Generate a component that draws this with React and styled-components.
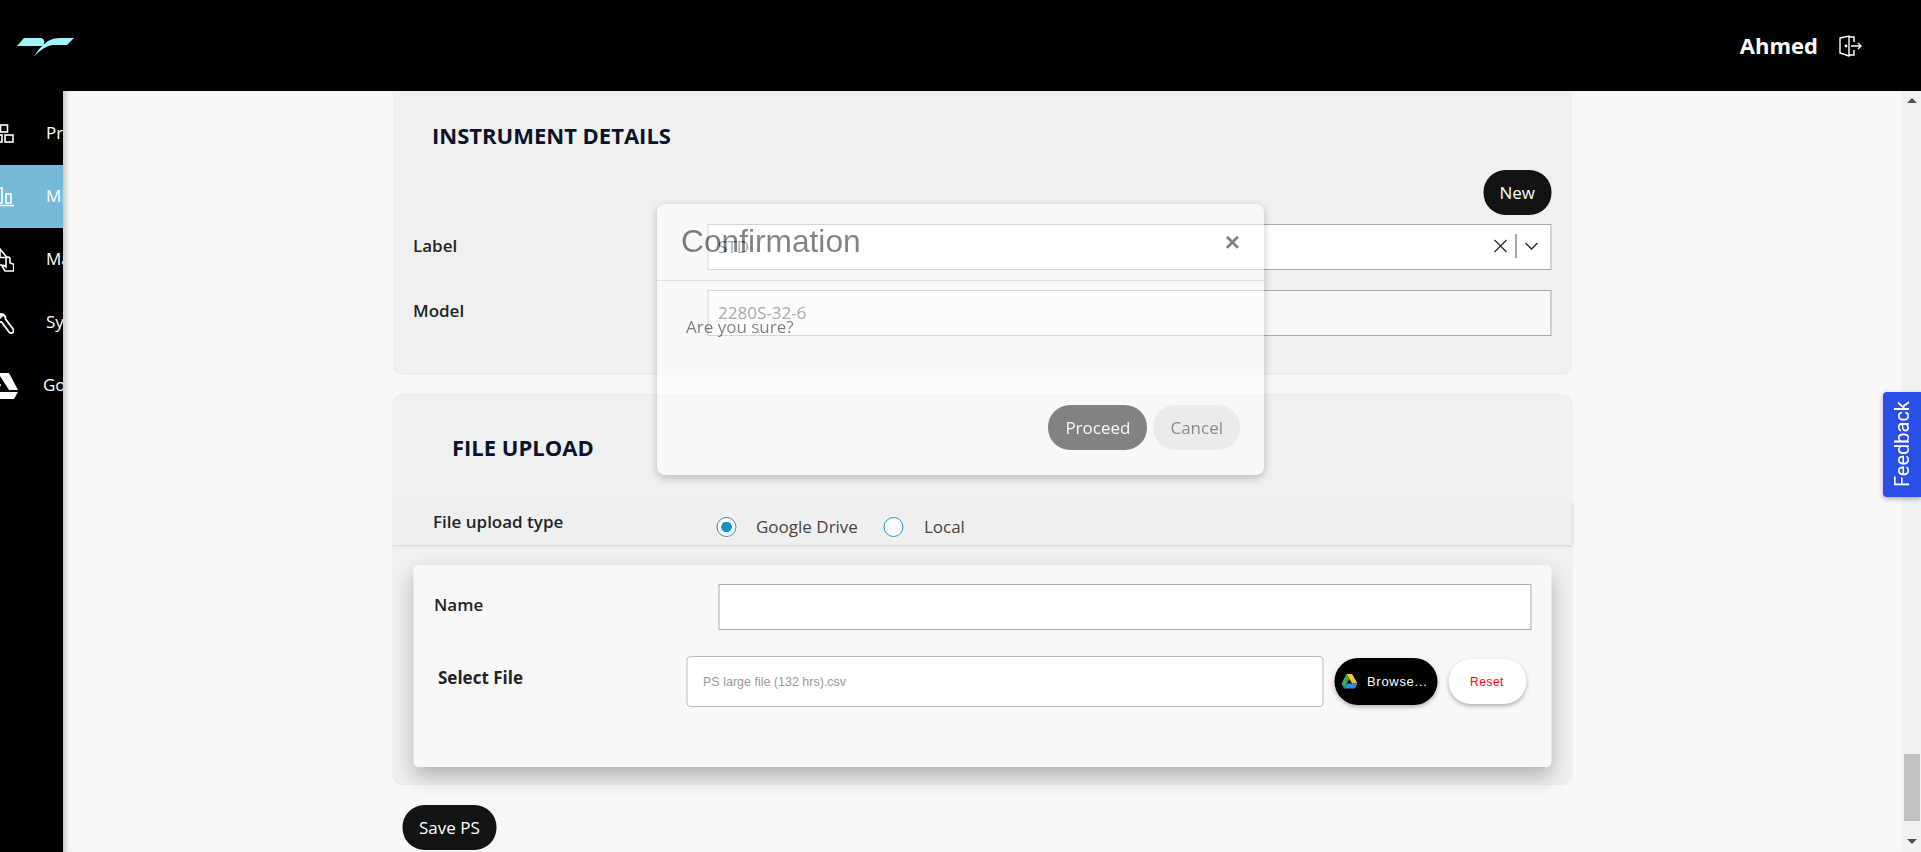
import React from 'react'
import styled, { createGlobalStyle } from 'styled-components'

const GlobalStyle = createGlobalStyle`
    html, body {
        margin: 0;
        height: 100%;
        overflow: hidden;
    }
    body {
        font-family: "Open Sans", "Liberation Sans", sans-serif;
        background-color: #000;
    }
    * {
        box-sizing: border-box;
    }
`

const Page = styled.div`
    display: flex;
    flex-direction: column;
    height: 852px;
    overflow: hidden;
`

const Header = styled.header`
    display: flex;
    justify-content: space-between;
    align-items: center;
    flex: 0 0 91px;
    background-color: #000;
    padding: 0 59px 0 17px;
`

const LogoSvg = styled.svg`
    margin-top: 3px;
`

const UserBox = styled.div`
    display: flex;
    align-items: center;
    gap: 21px;
    color: #fff;
    font-size: 22px;
    font-weight: 700;
`

const UserName = styled.span`
    padding-bottom: 2px;
`

const Body = styled.div`
    display: flex;
    flex: 1;
    min-height: 0;
`

const Sidebar = styled.nav`
    flex: 0 0 63px;
    padding-top: 11px;
    background-color: #000;
    overflow: hidden;
`

const NavRow = styled.div`
    display: flex;
    align-items: center;
    height: 63px;
    width: 240px;
    margin-left: -10px;
    padding-left: 10px;
    gap: ${props => props.$gap || 32}px;
    color: #fff;
    font-size: 17px;
    background-color: ${props => props.$active ? '#76bad9' : 'transparent'};

    svg {
        margin-left: -10px;
        flex: none;
    }

    span {
        padding-bottom: 2px;
    }
`

const Main = styled.main`
    flex: 1;
    min-width: 0;
    background-color: #f8f8f8;
    box-shadow: inset 7px 0 6px -5px rgba(0,0,0,25%);
    overflow: hidden;
`

const Column = styled.div`
    width: 1180px;
    margin: 0 auto;
    transform: translateX(-0.5px);
`

const Card = styled.section`
    position: relative;
    background-color: #f0f0f0;
    border-radius: ${props => props.$flat ? '0 0 10px 10px' : '10px'};
    margin-bottom: ${props => props.$flat ? '19px' : '0'};
    padding: ${props => props.$flat ? '30px 20px 39px 20px' : '0'};
    border: solid 1px #ececec;
    border-top: ${props => props.$flat ? 'none' : 'solid 1px #ececec'};
    height: ${props => props.$flat ? '284px' : '391px'};
`

const CardTitle = styled.h2`
    margin: 0;
    padding-left: ${props => props.$indent || 0}px;
    font-size: 22px;
    line-height: 28px;
    font-weight: 700;
    color: #0b132b;
`

const NewRow = styled.div`
    display: flex;
    justify-content: flex-end;
    margin: 21px 0 9px;
`

const PillButton = styled.button`
    height: 45px;
    padding: 0 ${props => props.$pad || 17}px;
    border: none;
    border-radius: 22px;
    background-color: #121414;
    color: #fff;
    font-family: inherit;
    font-size: 17px;
`

const FormRow = styled.div`
    display: flex;
    align-items: center;
    margin-bottom: ${props => props.$gap || 20}px;
`

const FieldLabel = styled.label`
    flex: 0 0 ${props => props.$width || 294}px;
    font-size: 17px;
    font-weight: ${props => props.$heavy ? 700 : 600};
    color: #212529;
    padding-bottom: ${props => props.$lift || 0}px;
`

const FieldBox = styled.div`
    display: flex;
    align-items: center;
    flex: 1;
    height: 46px;
    padding: 0 0 2px 10px;
    border: solid 1px #aaa;
    background-color: ${props => props.$dim ? '#f8f8f8' : '#fff'};
    color: #555;
    font-size: 17px;
`

const FieldValue = styled.span`
    flex: 1;
`

const SelectControls = styled.div`
    display: flex;
    align-items: center;
    height: 24px;
    padding-right: 12px;
    color: #222;
`

const SelectDivider = styled.span`
    width: 1px;
    height: 24px;
    margin: 0 8px;
    background-color: #555;
`

const UploadHead = styled.div`
    height: 106px;
    padding: 38px 0 0 59px;
`

const TypeStrip = styled.div`
    display: flex;
    align-items: flex-start;
    height: 44px;
    margin: 0 -1px;
    padding: 9px 0 0 41px;
    background-color: #efefef;
    box-shadow: 0 1px 2px rgba(0,0,0,12%), 0 -1px 1px rgba(0,0,0,2%);
`

const RadioOption = styled.div`
    display: flex;
    align-items: center;
    gap: 20px;
    margin: 5px 26px 0 0;
    color: #444;
    font-size: 17px;
`

const RadioMark = styled.span`
    display: block;
    width: 20px;
    height: 20px;
    border-radius: 50%;
    border: solid 1.5px #1a9ad6;
    background: ${props => props.$on
        ? 'radial-gradient(circle, #1292c8 0 5px, #fff 5.5px)'
        : '#fff'};
`

const InnerCard = styled.div`
    height: 202px;
    margin: 20px 20px 0;
    padding: 19px 20px 0 21px;
    background-color: #f8f8f8;
    border-radius: 5px;
    box-shadow: 0 10px 20px rgba(0,0,0,25%);
`

const NameInput = styled.div`
    flex: 1;
    height: 46px;
    border: solid 1px #aaa;
    background-color: #fff;
`

const FileRow = styled.div`
    display: flex;
    align-items: center;
    margin-top: 26px;
    padding-left: 4px;
`

const FileInput = styled.div`
    display: flex;
    align-items: center;
    width: 637px;
    height: 51px;
    padding-left: 16px;
    border: solid 1px #bbb;
    border-radius: 4px;
    background-color: #fff;
    color: #999;
    font-family: "Liberation Sans", Arial, sans-serif;
    font-size: 12.5px;
`

const BrowseButton = styled.button`
    display: flex;
    align-items: center;
    gap: 10px;
    width: 103px;
    height: 47px;
    margin-left: 11px;
    padding: 0 0 0 7px;
    border: none;
    border-radius: 24px;
    background-color: #000;
    color: #fff;
    font-family: "Liberation Sans", Arial, sans-serif;
    font-size: 13px;
    letter-spacing: 0.7px;
    box-shadow: 0 2px 4px rgba(0,0,0,30%);
`

const ResetButton = styled.button`
    width: 78px;
    height: 45px;
    margin-left: 11px;
    border: none;
    border-radius: 23px;
    background-color: #fff;
    color: #f00;
    font-family: "Liberation Sans", Arial, sans-serif;
    font-size: 12px;
    letter-spacing: 0.5px;
    box-shadow: 0 2px 4px rgba(0,0,0,30%);
`

const SaveRow = styled.div`
    margin: 20px 0 0 10px;
`

const ScrollTrack = styled.div`
    display: flex;
    flex-direction: column;
    align-items: center;
    flex: 0 0 19px;
    background-color: #f1f1f1;
`

const ScrollArrow = styled.span`
    width: 0;
    height: 0;
    margin: ${props => props.$up ? '7px 0 0' : '18px 0 8px'};
    border-left: 5px solid transparent;
    border-right: 5px solid transparent;
    border-bottom: ${props => props.$up ? '5px solid #505050' : 'none'};
    border-top: ${props => props.$up ? 'none' : '5px solid #505050'};
`

const ScrollThumb = styled.span`
    width: 16px;
    height: 67px;
    margin-top: auto;
    background-color: #c1c1c1;
`

const FeedbackTab = styled.div`
    position: fixed;
    top: 392px;
    right: 0;
    width: 38px;
    height: 105px;
    display: flex;
    align-items: center;
    justify-content: center;
    background-color: #2a4ee8;
    color: #fff;
    font-family: Roboto, sans-serif;
    font-size: 20px;
    border-radius: 4px 0 0 4px;
    box-shadow: 0 2px 5px rgba(0,0,0,30%);

    span {
        writing-mode: vertical-rl;
        transform: rotate(180deg);
    }
`

const Modal = styled.div`
    position: fixed;
    top: 204px;
    left: 657px;
    width: 607px;
    height: 271px;
    display: flex;
    flex-direction: column;
    background-color: #fff;
    border-radius: 8px;
    box-shadow: 0 3px 8px rgba(0,0,0,45%);
    opacity: 0.5;
`

const ModalHead = styled.div`
    display: flex;
    align-items: center;
    justify-content: space-between;
    flex: 0 0 77px;
    padding: 0 24px 0 24px;
    border-bottom: solid 1px #ccc;
`

const ModalTitle = styled.h3`
    margin: 0;
    padding-bottom: 2px;
    font-family: "Liberation Sans", Arial, sans-serif;
    font-size: 31.7px;
    font-weight: 400;
    color: #000a14;
`

const CloseMark = styled.span`
    font-family: "Liberation Sans", Arial, sans-serif;
    font-size: 26px;
    font-weight: 700;
    color: #000a14;
`

const ModalBody = styled.p`
    flex: 1;
    margin: 0;
    padding: 35px 0 0 29px;
    font-size: 17px;
    line-height: 22px;
    color: #000a14;
`

const ModalFoot = styled.div`
    display: flex;
    justify-content: flex-end;
    gap: 6px;
    padding: 0 24px 25px 0;
`

const CancelButton = styled(PillButton)`
    background-color: #e8e6e6;
    color: #222;
`

const LogoMark = () => (
    <LogoSvg width="57" height="20" viewBox="0 0 57 20">
        <path fill="#9ff5f9" d="M0 9 L7 1 L24 1 C28 2 28 6 26 9 Z" />
        <path fill="#9ff5f9" d="M17 20 C21 12 26 8 31 4 C35 2 38 1 43 1 L57 1 L50 8 L36 8 C29 9 23 13 17 20 Z" />
    </LogoSvg>
)

const LogoutIcon = () => (
    <svg width="23" height="22" viewBox="0 0 23 22" fill="none" stroke="#fff" strokeWidth="1.4">
        <path d="M1 3 L10 1 L10 21 L1 18 Z" />
        <path d="M10 2 H15 V7 M15 15 V20 H10" />
        <path d="M12 11 H22 M19 8 L22 11 L19 14" />
        <circle cx="7" cy="11" r="0.7" fill="#fff" />
    </svg>
)

const ProjectIcon = () => (
    <svg width="24" height="24" viewBox="0 0 24 24" fill="none" stroke="#fff" strokeWidth="1.6">
        <rect x="10.5" y="3" width="7" height="7" />
        <rect x="6" y="13" width="6" height="7" />
        <rect x="15" y="13" width="8" height="7" />
    </svg>
)

const ChartIcon = () => (
    <svg width="24" height="24" viewBox="0 0 24 24" fill="none" stroke="#fff" strokeWidth="1.6">
        <rect x="8" y="3" width="4" height="15" />
        <rect x="16" y="9" width="5" height="9" />
        <path d="M0 20.5 H24" />
    </svg>
)

const HandIcon = () => (
    <svg width="24" height="24" viewBox="0 0 24 24" fill="none" stroke="#fff" strokeWidth="1.6">
        <path d="M10 1 L17 9.5 H10 Z" />
        <path d="M9 17 H12" />
        <path d="M18 9 C19 9 20 10 20 11 V15 L23 16 C24 17 24 19 23.5 23 H15 L12 18 C12 17 14 17 16 19 V11 C16 10 17 9 18 9 Z" />
    </svg>
)

const WrenchIcon = () => (
    <svg width="24" height="24" viewBox="0 0 24 24" fill="none" stroke="#fff" strokeWidth="1.8">
        <path d="M9 3 C13 2 16 5 15.5 8 L23 18 C25 21 21 24 19 21 L11.5 11 C8 11 6 8 6 5 L10 7 L12 5 Z" />
    </svg>
)

const DriveOutline = () => (
    <svg width="28" height="26" viewBox="0 0 28 26" fill="#fff">
        <path d="M8 0 H19 L28 17 H19 Z" />
        <path d="M6 3 L11 12 L5 24 L0 15 Z" />
        <path d="M10 19 H28 L24 26 H6 Z" />
    </svg>
)

const DriveColor = () => (
    <svg width="16" height="15" viewBox="0 0 16 15">
        <path fill="#f4c430" d="M5 0 H10.5 L16 9.5 H10.5 Z" />
        <path fill="#34a853" d="M5 0 L7.8 4.8 L2.8 14.5 L0 9.5 Z" />
        <path fill="#2a8fe6" d="M5.4 9.5 H16 L13.2 14.5 H2.8 Z" />
    </svg>
)

const ClearIcon = () => (
    <svg width="14" height="14" viewBox="0 0 14 14" stroke="#222" strokeWidth="1.1">
        <path d="M1 1 L13 13 M13 1 L1 13" />
    </svg>
)

const ChevronIcon = () => (
    <svg width="14" height="10" viewBox="0 0 14 10" fill="none" stroke="#222" strokeWidth="1.3">
        <path d="M1 2 L7 8 L13 2" />
    </svg>
)

const navItems = [
    { label: 'Projects', icon: <ProjectIcon /> },
    { label: 'MI', icon: <ChartIcon />, active: true },
    { label: 'Manage', icon: <HandIcon /> },
    { label: 'System', icon: <WrenchIcon /> },
    { label: 'Google Drive', icon: <DriveOutline />, gap: 25 },
]

const App = () => {
    return (
        <>
        <GlobalStyle />
        <Page>
            <Header>
                <LogoMark />
                <UserBox>
                    <UserName>Ahmed</UserName>
                    <LogoutIcon />
                </UserBox>
            </Header>
            <Body>
                <Sidebar>
                    {navItems.map(item => (
                        <NavRow key={item.label} $active={item.active} $gap={item.gap}>
                            {item.icon}
                            <span>{item.label}</span>
                        </NavRow>
                    ))}
                </Sidebar>
                <Main>
                    <Column>
                        <Card $flat>
                            <CardTitle $indent={19}>INSTRUMENT DETAILS</CardTitle>
                            <NewRow>
                                <PillButton $pad={16}>New</PillButton>
                            </NewRow>
                            <FormRow>
                                <FieldLabel $lift={4}>Label</FieldLabel>
                                <FieldBox>
                                    <FieldValue>STD</FieldValue>
                                    <SelectControls>
                                        <ClearIcon />
                                        <SelectDivider />
                                        <ChevronIcon />
                                    </SelectControls>
                                </FieldBox>
                            </FormRow>
                            <FormRow>
                                <FieldLabel $lift={6}>Model</FieldLabel>
                                <FieldBox $dim>2280S-32-6</FieldBox>
                            </FormRow>
                        </Card>
                        <Card>
                            <UploadHead>
                                <CardTitle>FILE UPLOAD</CardTitle>
                            </UploadHead>
                            <TypeStrip>
                                <FieldLabel $width={283}>File upload type</FieldLabel>
                                <RadioOption>
                                    <RadioMark $on />
                                    Google Drive
                                </RadioOption>
                                <RadioOption>
                                    <RadioMark />
                                    Local
                                </RadioOption>
                            </TypeStrip>
                            <InnerCard>
                                <FormRow $gap={0}>
                                    <FieldLabel $width={284} $lift={6}>Name</FieldLabel>
                                    <NameInput />
                                </FormRow>
                                <FileRow>
                                    <FieldLabel as="span" $width={248} $lift={8} $heavy>Select File</FieldLabel>
                                    <FileInput>PS large file (132 hrs).csv</FileInput>
                                    <BrowseButton>
                                        <DriveColor />
                                        Browse...
                                    </BrowseButton>
                                    <ResetButton>Reset</ResetButton>
                                </FileRow>
                            </InnerCard>
                        </Card>
                        <SaveRow>
                            <PillButton>Save PS</PillButton>
                        </SaveRow>
                    </Column>
                </Main>
                <ScrollTrack>
                    <ScrollArrow $up />
                    <ScrollThumb />
                    <ScrollArrow />
                </ScrollTrack>
            </Body>
        </Page>
        <Modal>
            <ModalHead>
                <ModalTitle>Confirmation</ModalTitle>
                <CloseMark>×</CloseMark>
            </ModalHead>
            <ModalBody>Are you sure?</ModalBody>
            <ModalFoot>
                <PillButton>Proceed</PillButton>
                <CancelButton>Cancel</CancelButton>
            </ModalFoot>
        </Modal>
        <FeedbackTab><span>Feedback</span></FeedbackTab>
        </>
    )
}

export default App
